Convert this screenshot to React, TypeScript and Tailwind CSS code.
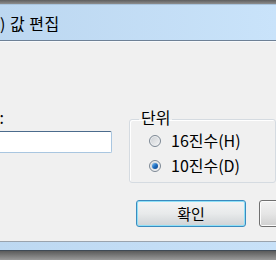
import React from "react";

function Radio({ checked, label }: { checked?: boolean; label: string }) {
  return (
    <div className="flex items-center h-[25px]">
      <div className="w-[12px] h-[12px] -ml-[1px] rounded-full border border-[#7d8894] bg-gradient-to-br from-[#c9cdd2] to-[#f6f6f6] shadow-[inset_0_0_0_1px_#eef0f2] flex items-center justify-center">
        {checked && (
          <div className="w-[6px] h-[6px] rounded-full bg-gradient-to-br from-[#86c8f7] via-[#1d6fc1] to-[#0d3f86]" />
        )}
      </div>
      <span className="ml-[10px] text-[16px] leading-[25px] text-black">{label}</span>
    </div>
  );
}

export default function App() {
  return (
    <div className="w-[276px] h-[260px] flex flex-col overflow-hidden font-['Noto_Sans_CJK_KR',sans-serif]">
      {/* window frame top */}
      <div className="h-[4px] bg-gradient-to-b from-[#5e5e5e] to-[#8e8e8e]" />
      <div className="h-[1px] bg-[#a9c4dd]" />

      {/* Title bar */}
      <div className="h-[35px] flex items-center bg-gradient-to-r from-[#bcd7f0] to-[#c9e3fa]">
        <span className="pl-[0px] pt-[1px] text-[16px] leading-none text-black tracking-[0.5px]">) 값 편집</span>
      </div>
      <div className="h-[1px] bg-[#6e8196]" />
      <div className="h-[1px] bg-[#f7fafd]" />

      {/* Client area */}
      <div className="flex-1 bg-[#f0f0f0] flex flex-col pt-[69px]">
        <div className="flex items-start">
          <div className="w-[112px] flex flex-col">
            <div className="-mt-[2px] -ml-[44px] w-[48px] h-[16px] text-right text-[16px] leading-[16px] text-black">
              값(V):
            </div>
            <div className="mt-[6px] -ml-[10px] h-[22px] w-[122px] bg-white border border-[#a9c6e0] border-t-[#4b6b8c] rounded-[2px]" />
          </div>

          <fieldset className="-mt-[2px] ml-[17px] w-[170px] border border-[#d5dbe1] rounded-[3px] px-0 pb-[4px] shadow-[inset_1px_1px_0_#fff]">
            <legend className="ml-[9px] px-[2px] text-[16px] leading-[16px] pb-[5px] text-black">단위</legend>
            <div className="-mt-[2px] pl-[20px] flex flex-col">
              <Radio label="16진수(H)" />
              <Radio checked label="10진수(D)" />
            </div>
          </fieldset>
        </div>

        <div className="flex gap-[13px] pl-[136px] mt-[17px]">
          <button className="shrink-0 w-[110px] h-[27px] rounded-[3px] border border-[#3a8bbf] shadow-[inset_0_0_0_1px_#8fe0f7] bg-gradient-to-b from-[#f3f4f4] via-[#e8eaeb] to-[#cfd3d6] text-[15px] leading-none text-black">
            확인
          </button>
          <button className="shrink-0 w-[110px] h-[27px] rounded-[3px] border border-[#707070] shadow-[inset_0_0_0_1px_#fcfcfc] bg-gradient-to-b from-[#f2f2f2] via-[#e6e6e6] to-[#d0d0d0] text-[15px] leading-none text-black">
            취소
          </button>
        </div>
      </div>

      {/* bottom frame */}
      <div className="h-[1px] bg-[#9aa3ad]" />
      <div className="h-[8px] bg-gradient-to-r from-[#bdd8f1] to-[#c8e1f8]" />
      <div className="h-[1px] bg-[#3f4a56]" />
      <div className="h-[9px] bg-gradient-to-b from-[#5b5b5b] to-[#9a9a9a]" />
    </div>
  );
}
